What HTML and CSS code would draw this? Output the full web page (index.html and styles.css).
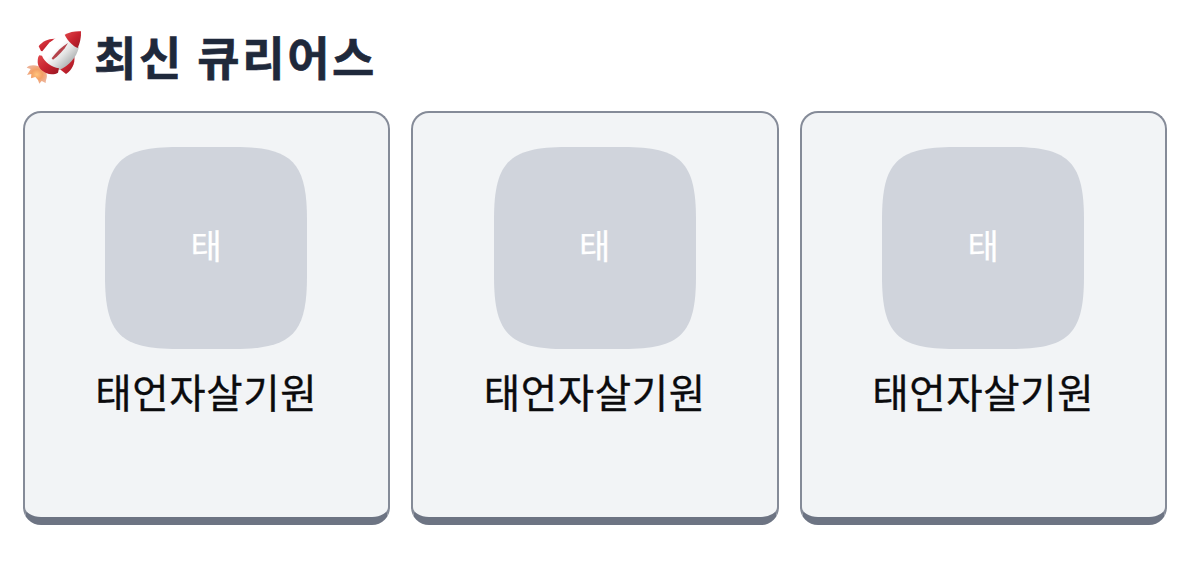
FILE: index.html
```html
<!DOCTYPE html>
<html lang="ko">
<head>
<meta charset="utf-8">
<title>최신 큐리어스</title>
<link rel="stylesheet" href="styles.css">
</head>
<body>
<svg class="defs" width="0" height="0" aria-hidden="true">
  <symbol id="squircle" viewBox="0 0 200 200"><path d="M72 0H128C185 0 200 15 200 72V128C200 185 185 200 128 200H72C15 200 0 185 0 128V72C0 15 15 0 72 0Z"/></symbol>
</svg>
<main class="page">
  <h2 class="title">
    <svg class="rocket" viewBox="45 40 180 170" aria-hidden="true">
      <defs>
        <linearGradient id="hull" x1="0" y1="0" x2="1" y2="1"><stop offset=".4" stop-color="#fff"/><stop offset=".58" stop-color="#e2e3e3"/><stop offset=".8" stop-color="#adb0b1"/></linearGradient>
        <linearGradient id="red" x1="0" y1="0" x2="1" y2="1"><stop offset="0" stop-color="#e0484c"/><stop offset=".5" stop-color="#c8232f"/><stop offset="1" stop-color="#981823"/></linearGradient>
        <radialGradient id="fire"><stop offset="0" stop-color="#ffc47c"/><stop offset=".55" stop-color="#f3a066"/><stop offset="1" stop-color="#eeb193"/></radialGradient>
      </defs>
      <path fill="url(#fire)" d="M86 152C72 147 58 148 50 156L62 160 51 178 64 175 63 188 76 184 84 193 88 204 95 196 107 202C107 191 114 185 109 172Z"/>
      <path fill="url(#red)" d="M86 92C98 76 119 67 141 70L119 80 97 107 93 106Z"/>
      <path fill="url(#red)" d="M188 119L193 122C196 144 185 165 168 175L149 160Z"/>
      <path fill="url(#hull)" d="M96 122C104 92 134 60 166 54L207 95C199 126 176 152 148 163L115 152Z"/>
      <path fill="url(#red)" d="M164 57C178 49 197 46 213 47C214 64 210 84 203 97C190 91 174 78 164 57Z"/>
      <path fill="url(#red)" d="M88 119L96 120C104 140 124 154 147 158L144 171C134 177 120 177 108 172C94 166 84 155 83 140C83 130 84 124 88 119Z"/>
      <path fill="#b5434b" d="M174 82C156 92 139 109 125 128L129 132C145 120 162 104 174 82Z"/>
    </svg>
    <span>최신 큐리어스</span>
  </h2>
  <section class="cards">
    <article class="card">
      <div class="avatar"><svg class="shape"><use href="#squircle"/></svg><span class="initial">태</span></div>
      <p class="name">태언자살기원</p>
    </article>
    <article class="card">
      <div class="avatar"><svg class="shape"><use href="#squircle"/></svg><span class="initial">태</span></div>
      <p class="name">태언자살기원</p>
    </article>
    <article class="card">
      <div class="avatar"><svg class="shape"><use href="#squircle"/></svg><span class="initial">태</span></div>
      <p class="name">태언자살기원</p>
    </article>
  </section>
</main>
</body>
</html>
```

FILE: styles.css
```css
* { box-sizing: border-box; }
body {
  margin: 0;
  background: #fff;
  font-family: "Noto Sans CJK KR", sans-serif;
}
.defs { position: absolute; }
.page { padding: 24px 32px 0 22.5px; }
.title {
  display: flex;
  align-items: center;
  gap: 9px;
  height: 66px;
  margin: 0 0 20.5px;
  padding-left: 2.5px;
  color: #1f293b;
  font-size: 46px;
  font-weight: 700;
  letter-spacing: 2.6px;
  word-spacing: -2px;
  line-height: 63px;
  -webkit-text-stroke: 0.6px #1f293b;
}
.title span { padding-bottom: 3px; }
.rocket { width: 60px; height: 56.67px; }
.cards {
  display: grid;
  grid-template-columns: repeat(3, 367.5px);
  gap: 21px;
}
.card {
  display: flex;
  flex-direction: column;
  align-items: center;
  height: 414.5px;
  padding-top: 34px;
  border: 2px solid #858b98;
  border-bottom: 8px solid #6d7483;
  border-radius: 18px;
  background: #f2f4f6;
}
.avatar {
  display: grid;
  place-items: center;
  width: 202px;
  height: 202px;
}
.shape {
  grid-area: 1 / 1;
  width: 202px;
  height: 202px;
  fill: #d0d4dc;
}
.initial {
  grid-area: 1 / 1;
  z-index: 1;
  padding-bottom: 6px;
  color: #fff;
  font-size: 34px;
  line-height: 48px;
  -webkit-text-stroke: 0.25px #fff;
}
.name {
  margin: 12px 0 0;
  color: #0b0b0d;
  font-size: 39.5px;
  letter-spacing: 0.7px;
  line-height: 60px;
  -webkit-text-stroke: 0.35px #0b0b0d;
}
```
